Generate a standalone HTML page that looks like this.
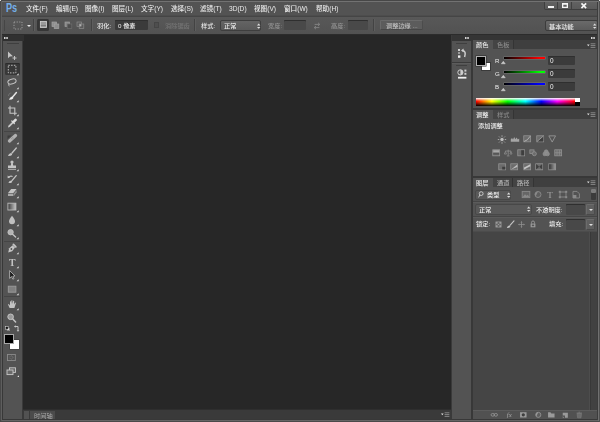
<!DOCTYPE html>
<html lang="zh-CN">
<head>
<meta charset="utf-8">
<title>Adobe Photoshop CS6</title>
<style>
html,body{margin:0;padding:0;background:#535353;}
body{width:600px;height:422px;overflow:hidden;position:relative;font-family:"Liberation Sans","Noto Sans CJK SC",sans-serif;font-size:12px;line-height:18px;color:#e6e6e6;}
#app{filter:blur(0.4px);position:absolute;left:0;top:0;width:600px;height:422px;overflow:hidden;background:#535353;}
.a{position:absolute;}
.t{position:absolute;white-space:nowrap;font-size:12.4px;line-height:18px;color:#ececec;letter-spacing:0;font-weight:500;transform:translateZ(0) scale(0.5);transform-origin:0 0;}
.m{font-size:13.2px;top:3.5px;}
.dim{color:#8d8d8d;}
.inp{position:absolute;background:#3b3b3b;box-shadow:inset 0 1px 0 #2f2f2f;border-radius:1px;}
.sel{position:absolute;background:linear-gradient(#666,#585858);border:1px solid #3a3a3a;border-radius:2px;box-sizing:border-box;}
.vsep{position:absolute;width:1px;background:#434343;border-right:1px solid #5e5e5e;}
.tabbar{position:absolute;background:#3f3f3f;}
.itab{position:absolute;background:#444;border-right:1px solid #343434;box-sizing:border-box;height:9px;}
.tab{position:absolute;background:#535353;}
svg{position:absolute;overflow:visible;transform:translateZ(0);}
</style>
</head>
<body>
<div id="app">

<!-- ===== menu bar ===== -->
<div class="a" id="menubar" style="left:0;top:0;width:600px;height:15px;background:#535353;"></div>
<div class="t" style="left:6px;top:2px;font-size:12.5px;line-height:13px;font-weight:bold;color:#74aee8;transform:scaleX(0.73);transform-origin:0 0;">Ps</div>
<div class="t m" style="left:26px;">文件(F)</div>
<div class="t m" style="left:56px;">编辑(E)</div>
<div class="t m" style="left:85px;">图像(I)</div>
<div class="t m" style="left:112px;">图层(L)</div>
<div class="t m" style="left:141px;">文字(Y)</div>
<div class="t m" style="left:171px;">选择(S)</div>
<div class="t m" style="left:200px;">滤镜(T)</div>
<div class="t m" style="left:229px;">3D(D)</div>
<div class="t m" style="left:254px;">视图(V)</div>
<div class="t m" style="left:284px;">窗口(W)</div>
<div class="t m" style="left:316px;">帮助(H)</div>

<!-- window buttons -->
<div class="a" style="left:544px;top:0;width:54px;height:10px;background:linear-gradient(#646464,#5a5a5a);border:1px solid #3e3e3e;border-top:none;box-sizing:border-box;border-radius:0 0 2px 2px;"></div>
<div class="a" style="left:557px;top:0;width:1px;height:9px;background:#404040;"></div>
<div class="a" style="left:571px;top:0;width:1px;height:9px;background:#404040;"></div>
<div class="a" style="left:548px;top:6px;width:5.5px;height:1.5px;background:#f2f2f2;"></div>
<svg style="left:561.8px;top:2.8px;" width="6" height="5" viewBox="0 0 6 5"><path d="M0 0H6V5H0zM1.3 1.8V3.8H4.7V1.8z" fill="#f4f4f4" fill-rule="evenodd"/></svg>
<svg style="left:581.2px;top:2.6px;" width="5.6" height="5.6" viewBox="0 0 5 5"><path d="M0.4 0.4L4.6 4.6M4.6 0.4L0.4 4.6" stroke="#f6f6f6" stroke-width="1.45" fill="none"/></svg>

<!-- ===== options bar ===== -->
<div class="a" style="left:0;top:15px;width:600px;height:1px;background:#4d4d4d;"></div><div class="a" style="left:0;top:16px;width:600px;height:1px;background:#454545;"></div>
<div class="a" id="optbar" style="left:0;top:17px;width:600px;height:17px;background:linear-gradient(#585858,#525252);"></div>
<div class="a" style="left:0;top:34px;width:600px;height:1px;background:#2c2c2c;"></div>

<!-- marquee tool preset -->
<div class="a" style="left:4px;top:20px;width:1px;height:11px;background:#464646;"></div>
<svg style="left:13px;top:21px;" width="10" height="9" viewBox="0 0 10 9"><rect x="1" y="1" width="8" height="7" fill="none" stroke="#a4a4a4" stroke-width="0.9" stroke-dasharray="1.2 1.4"/></svg>
<div class="a" style="left:27px;top:25px;width:0;height:0;border-left:2px solid transparent;border-right:2px solid transparent;border-top:2px solid #e8e8e8;"></div>
<div class="vsep" style="left:33px;top:19px;height:12px;"></div>
<!-- 4 selection mode buttons -->
<div class="a" style="left:37px;top:19px;width:12px;height:12px;background:#363636;border-radius:1.5px;"></div>
<svg style="left:39px;top:20px;" width="9" height="9" viewBox="0 0 9 9"><rect x="1.4" y="1.4" width="6" height="6" fill="#9a9a9a" stroke="#cdcdcd" stroke-width="0.9"/><path d="M1.8 5.6H7" stroke="#6a6a6a" stroke-width="0.7"/></svg>
<svg style="left:51px;top:21px;" width="9" height="9" viewBox="0 0 9 9"><rect x="1" y="1" width="4.6" height="4.6" fill="#8e8e8e" stroke="#a4a4a4" stroke-width="0.7"/><rect x="3.2" y="3" width="4.6" height="4.6" fill="#8e8e8e" stroke="#a4a4a4" stroke-width="0.7"/></svg>
<svg style="left:63.5px;top:21px;" width="9" height="9" viewBox="0 0 9 9"><rect x="1" y="1" width="4.6" height="4.6" fill="#8a8a8a" stroke="#9c9c9c" stroke-width="0.7"/><rect x="3.2" y="3" width="4.6" height="4.6" fill="#4e4e4e" stroke="#6e6e6e" stroke-width="0.7"/></svg>
<svg style="left:76px;top:21px;" width="9" height="9" viewBox="0 0 9 9"><rect x="1" y="1" width="4.6" height="4.6" fill="#5a5a5a" stroke="#8c8c8c" stroke-width="0.7"/><rect x="3.2" y="3" width="4.6" height="4.6" fill="#5a5a5a" stroke="#8c8c8c" stroke-width="0.7"/><rect x="3.4" y="3.2" width="2" height="2.2" fill="#b0b0b0"/></svg>
<div class="vsep" style="left:91px;top:19px;height:12px;"></div>

<div class="t" style="left:97px;top:21px;">羽化:</div>
<div class="inp" style="left:115px;top:20px;width:33px;height:10px;"></div>
<div class="t" style="left:117.5px;top:21px;">0 像素</div>
<div class="a" style="left:154px;top:22px;width:5px;height:6px;background:#4e4e4e;border:1px solid #454545;box-sizing:border-box;"></div>
<div class="t dim" style="left:164.5px;top:21px;color:#767676;">消除锯齿</div>
<div class="vsep" style="left:194px;top:19px;height:12px;"></div>
<div class="t" style="left:200.5px;top:21px;">样式:</div>
<div class="sel" style="left:220px;top:20px;width:41px;height:11px;background:linear-gradient(#646464,#595959);border-color:#3e3e3e;"></div>
<div class="t" style="left:224px;top:21px;">正常</div>
<svg style="left:256.5px;top:22.5px;" width="3.4" height="6.4" viewBox="0 0 4 7"><path d="M0 2.6L2 0.4L4 2.6zM0 4.4L2 6.6L4 4.4z" fill="#e0e0e0"/></svg>
<div class="t dim" style="left:268px;top:21px;color:#939393;">宽度:</div>
<div class="inp" style="left:284px;top:20px;width:22px;height:10px;background:#494949;"></div>
<svg style="left:313px;top:21.5px;" width="8" height="8" viewBox="0 0 8 8"><path d="M1.6 2.4H6.6M5 0.8L6.8 2.4L5 4M6.4 5.6H1.4M3 4L1.2 5.6L3 7.2" stroke="#858585" stroke-width="0.9" fill="none"/></svg>
<div class="t dim" style="left:330.5px;top:21px;color:#939393;">高度:</div>
<div class="inp" style="left:348px;top:20px;width:20px;height:10px;background:#494949;"></div>
<div class="vsep" style="left:373px;top:19px;height:12px;"></div>
<div class="a" style="left:380px;top:20px;width:43px;height:10px;background:#5c5c5c;border:1px solid #6a6a6a;border-bottom-color:#474747;border-right-color:#4c4c4c;box-sizing:border-box;border-radius:1.5px;"></div>
<div class="t dim" style="left:386px;top:20.5px;color:#bebebe;">调整边缘 ...</div>

<div class="sel" style="left:545px;top:20px;width:53px;height:11px;background:linear-gradient(#6a6a6a,#5b5b5b);border-color:#3c3c3c;"></div>
<div class="t" style="left:549px;top:21.5px;">基本功能</div>
<svg style="left:593px;top:22.5px;" width="3.4" height="6.4" viewBox="0 0 4 7"><path d="M0 2.6L2 0.4L4 2.6zM0 4.4L2 6.6L4 4.4z" fill="#e0e0e0"/></svg>

<!-- ===== canvas ===== -->
<div class="a" id="canvas" style="left:23px;top:35px;width:428px;height:376px;background:#272727;"></div>

<!-- ===== left tool panel ===== -->
<div class="a" style="left:2px;top:35px;width:1px;height:385px;background:#383838;"></div>
<div class="a" style="left:3px;top:35px;width:21px;height:6px;background:#303030;"></div>
<svg style="left:4.3px;top:37px;" width="4" height="2" viewBox="0 0 4 2"><rect x="0" y="0" width="1.5" height="2" fill="#d4d4d4"/><rect x="2.3" y="0" width="1.5" height="2" fill="#d4d4d4"/></svg>
<div class="a" id="tools" style="left:3px;top:41px;width:19px;height:378px;background:#535353;"></div>
<div class="a" style="left:22px;top:41px;width:1px;height:378px;background:#3a3a3a;"></div>
<div class="a" style="left:7px;top:43px;width:12px;height:1px;background:#3f3f3f;"></div>

<!-- TOOLS START -->
<svg style="left:3px;top:47px;" width="20" height="16" viewBox="0 0 20 16"><path d="M5 4.5L5 11.2L6.8 9.6L9.9 9.3z" fill="#c4c4c4"/><path d="M9.5 11H13.5M11.5 9V13" stroke="#c4c4c4" stroke-width="1.1" fill="none"/></svg>
<div class="a" style="left:5px;top:63px;width:15px;height:12px;background:#383838;border-radius:1.5px;box-shadow:inset 0 1px 0 #2c2c2c;"></div>
<svg style="left:3px;top:61px;" width="20" height="16" viewBox="0 0 20 16"><rect x="5.3" y="4.3" width="7.6" height="7.6" fill="none" stroke="#bcbcbc" stroke-width="1" stroke-dasharray="1.5 1.3"/><path d="M15.6 14.2L13.6 14.2L15.6 12.2z" fill="#e8e8e8"/></svg>
<svg style="left:3px;top:75px;" width="20" height="16" viewBox="0 0 20 16"><ellipse cx="9" cy="6.5" rx="4.2" ry="2.4" transform="rotate(-14 9 6.5)" fill="none" stroke="#c4c4c4" stroke-width="1"/><path d="M6 8.6Q5.2 10 6.3 11.3" stroke="#c4c4c4" stroke-width="0.9" fill="none"/><path d="M15.6 14.2L13.6 14.2L15.6 12.2z" fill="#e8e8e8"/></svg>
<svg style="left:3px;top:88px;" width="20" height="16" viewBox="0 0 20 16"><path d="M13.4 4.6L9.6 9" stroke="#e4e4e4" stroke-width="1.5" stroke-linecap="round" fill="none"/><path d="M6 11.8Q6.6 9 9 8.4Q10.8 9 10.2 10.6Q8.6 12 6 11.8z" fill="#f0f0f0"/><path d="M5.5 7.5a3 3 0 0 1 3-2.5" stroke="#9a9a9a" stroke-width="0.8" fill="none" stroke-dasharray="1 1"/><path d="M15.6 14.2L13.6 14.2L15.6 12.2z" fill="#e8e8e8"/></svg>
<svg style="left:3px;top:102px;" width="20" height="16" viewBox="0 0 20 16"><path d="M7 3.8V11.2H13.8M5 6H11.8V13.2" stroke="#c6c6c6" stroke-width="1.1" fill="none"/><path d="M15.6 14.2L13.6 14.2L15.6 12.2z" fill="#e8e8e8"/></svg>
<svg style="left:3px;top:115px;" width="20" height="16" viewBox="0 0 20 16"><path d="M5 12.4L5.4 10.8L9.4 6.8L10.6 8L6.6 12z" fill="#cacaca"/><path d="M8.8 6L11.4 8.6" stroke="#d8d8d8" stroke-width="1.2" stroke-linecap="round" fill="none"/><path d="M10.6 6.8L12.6 4.8" stroke="#e0e0e0" stroke-width="2.6" stroke-linecap="round" fill="none"/><path d="M15.6 14.2L13.6 14.2L15.6 12.2z" fill="#e8e8e8"/></svg>
<svg style="left:3px;top:130px;" width="20" height="16" viewBox="0 0 20 16"><path d="M6.5 11L12.5 5.5" stroke="#b2b2b2" stroke-width="3.3" stroke-linecap="round" fill="none"/><path d="M8.6 9L10.4 7.4" stroke="#8a8a8a" stroke-width="1.6" fill="none" stroke-dasharray="0.7 0.7"/><path d="M4.5 5.5L8.5 5.5L4.5 9z" fill="#3c3c3c"/><path d="M15.6 14.2L13.6 14.2L15.6 12.2z" fill="#e8e8e8"/></svg>
<svg style="left:3px;top:144px;" width="20" height="16" viewBox="0 0 20 16"><path d="M13.3 4L9 9" stroke="#c4c4c4" stroke-width="1.3" stroke-linecap="round" fill="none"/><path d="M5 12Q5.6 9.4 8 9Q9.6 9.6 9 11Q7.4 12.4 5 12z" fill="#c4c4c4"/><path d="M15.6 14.2L13.6 14.2L15.6 12.2z" fill="#e8e8e8"/></svg>
<svg style="left:3px;top:157px;" width="20" height="16" viewBox="0 0 20 16"><circle cx="9" cy="5" r="1.6" fill="#c4c4c4"/><path d="M8.2 6H9.8L10.2 8.6H13V11H5V8.6H7.8z" fill="#c4c4c4"/><path d="M5 12.3H13" stroke="#c4c4c4" stroke-width="0.9"/><path d="M15.6 14.2L13.6 14.2L15.6 12.2z" fill="#e8e8e8"/></svg>
<svg style="left:3px;top:171px;" width="20" height="16" viewBox="0 0 20 16"><path d="M13.2 4.6L9 9.6" stroke="#c4c4c4" stroke-width="1.3" stroke-linecap="round" fill="none"/><path d="M5.4 12Q6 9.8 8.2 9.4Q9.6 10 9 11.2Q7.6 12.4 5.4 12z" fill="#c4c4c4"/><path d="M5 6.6Q7 4.4 9.6 5.4" stroke="#c4c4c4" stroke-width="1.1" fill="none"/><path d="M4.6 4.4L4.8 7.2L7.2 6.4z" fill="#c4c4c4"/><path d="M15.6 14.2L13.6 14.2L15.6 12.2z" fill="#e8e8e8"/></svg>
<svg style="left:3px;top:184px;" width="20" height="16" viewBox="0 0 20 16"><path d="M5 9L8.2 5H13.6L10.4 9z" fill="#c4c4c4"/><path d="M5 9.6H10.4V12H5z" fill="#a8a8a8"/><path d="M10.9 9.4L13.6 6V8.6L10.9 12z" fill="#8e8e8e"/><path d="M15.6 14.2L13.6 14.2L15.6 12.2z" fill="#e8e8e8"/></svg>
<svg style="left:3px;top:198px;" width="20" height="16" viewBox="0 0 20 16"><defs><linearGradient id="gr1" x1="0" x2="1" y1="0" y2="0"><stop offset="0" stop-color="#3a3a3a"/><stop offset="1" stop-color="#c8c8c8"/></linearGradient></defs><rect x="4.9" y="5.2" width="8" height="6.8" fill="url(#gr1)" stroke="#bcbcbc" stroke-width="0.9"/><path d="M15.6 14.2L13.6 14.2L15.6 12.2z" fill="#e8e8e8"/></svg>
<svg style="left:3px;top:212px;" width="20" height="16" viewBox="0 0 20 16"><path d="M9 3.8Q12 7.6 12 9.2A3 3 0 0 1 6 9.2Q6 7.6 9 3.8z" fill="#c0c0c0"/><path d="M15.6 14.2L13.6 14.2L15.6 12.2z" fill="#e8e8e8"/></svg>
<svg style="left:3px;top:225px;" width="20" height="16" viewBox="0 0 20 16"><circle cx="7.6" cy="7.2" r="2.7" fill="#b4b4b4" stroke="#c4c4c4" stroke-width="0.8"/><path d="M9.6 9.2L12.6 12" stroke="#c4c4c4" stroke-width="1.3" stroke-linecap="round"/><path d="M15.6 14.2L13.6 14.2L15.6 12.2z" fill="#e8e8e8"/></svg>
<svg style="left:3px;top:240px;" width="20" height="16" viewBox="0 0 20 16"><path d="M5.2 12.4L6.2 8.2L9.6 5.2L12 7.6L9.2 11.2z" fill="#c4c4c4"/><circle cx="8.4" cy="9" r="0.9" fill="#535353"/><path d="M10.4 4.4L12.8 6.8" stroke="#c4c4c4" stroke-width="1.8" stroke-linecap="round"/><path d="M15.6 14.2L13.6 14.2L15.6 12.2z" fill="#e8e8e8"/></svg>
<svg style="left:3px;top:254px;" width="20" height="16" viewBox="0 0 20 16"><text transform="translate(9.2 11.6) scale(0.5)" x="0" y="0" text-anchor="middle" font-family="Liberation Serif, serif" font-weight="bold" font-size="19.6" fill="#c4c4c4">T</text><path d="M15.6 14.2L13.6 14.2L15.6 12.2z" fill="#e8e8e8"/></svg>
<svg style="left:3px;top:267px;" width="20" height="16" viewBox="0 0 20 16"><path d="M6.6 3.6L6.6 11.4L8.6 9.6L9.8 12.2L11 11.6L9.8 9.2L12 9z" fill="#1e1e1e" stroke="#bdbdbd" stroke-width="0.8"/><path d="M15.6 14.2L13.6 14.2L15.6 12.2z" fill="#e8e8e8"/></svg>
<svg style="left:3px;top:281px;" width="20" height="16" viewBox="0 0 20 16"><rect x="5.3" y="5.2" width="7.6" height="6" fill="#808080" stroke="#9c9c9c" stroke-width="0.9"/><path d="M15.6 14.2L13.6 14.2L15.6 12.2z" fill="#e8e8e8"/></svg>
<svg style="left:3px;top:296px;" width="20" height="16" viewBox="0 0 20 16"><path d="M6.6 12L5 8.6L5.8 8L7 9.4V5.4L7.9 5.2L8.3 8V4.4L9.3 4.3L9.6 8L10.2 4.8L11.2 5L11 8.4L12.2 6.4L13 6.9L12 10L11.4 12z" fill="#c4c4c4"/><path d="M15.6 14.2L13.6 14.2L15.6 12.2z" fill="#e8e8e8"/></svg>
<svg style="left:3px;top:310px;" width="20" height="16" viewBox="0 0 20 16"><circle cx="7.6" cy="6.8" r="2.8" fill="#9a9a9a" stroke="#c4c4c4" stroke-width="1"/><path d="M9.8 9L12.6 12" stroke="#c4c4c4" stroke-width="1.5" stroke-linecap="round"/></svg>
<div class="a" style="left:4px;top:131px;width:16px;height:1px;background:#454545;"></div>
<div class="a" style="left:4px;top:241px;width:16px;height:1px;background:#454545;"></div>
<div class="a" style="left:4px;top:296px;width:16px;height:1px;background:#454545;"></div>
<svg style="left:5px;top:326px;" width="5" height="5" viewBox="0 0 5 5"><rect x="1.9" y="1.9" width="2.8" height="2.8" fill="#f0f0f0" stroke="#333" stroke-width="0.4"/><rect x="0.4" y="0.4" width="2.8" height="2.8" fill="#111" stroke="#d0d0d0" stroke-width="0.6"/></svg>
<svg style="left:14px;top:325px;" width="6" height="7" viewBox="0 0 6 7"><path d="M1 1.5H4V5.5" stroke="#d0d0d0" stroke-width="0.9" fill="none"/><path d="M0 1.5L1.6 0.2V2.8zM4 6.8L2.7 5.2H5.3z" fill="#d0d0d0"/></svg>
<div class="a" style="left:10px;top:340px;width:9px;height:9px;background:#fff;box-shadow:0 0 0 0.5px #3a3a3a;"></div>
<div class="a" style="left:4px;top:334px;width:10px;height:10px;background:#000;border:1px solid #a8a8a8;box-sizing:border-box;"></div>
<svg style="left:7.4px;top:353.6px;" width="8.8" height="7" viewBox="0 0 10 8"><rect x="0.5" y="0.5" width="9" height="7" fill="none" stroke="#8c8c8c" stroke-width="1"/><circle cx="5" cy="4" r="1.8" fill="none" stroke="#8c8c8c" stroke-width="0.8" stroke-dasharray="1 0.8"/></svg>
<svg style="left:6px;top:367px;" width="14" height="11" viewBox="0 0 14 11"><rect x="3.5" y="0.8" width="6" height="4.6" fill="#6a6a6a" stroke="#c8c8c8" stroke-width="0.9"/><rect x="1" y="3" width="6" height="4.6" fill="#6a6a6a" stroke="#c8c8c8" stroke-width="0.9"/><path d="M13 10L11.2 10L13 8.2z" fill="#e8e8e8"/></svg>
<!-- TOOLS END -->

<!-- timeline bar -->
<div class="a" style="left:23px;top:409px;width:428px;height:1px;background:#2e2e2e;"></div>
<div class="a" style="left:23px;top:410px;width:428px;height:9px;background:#3a3a3a;"></div>
<div class="a" style="left:24px;top:411px;width:5px;height:8px;background:#525252;"></div>
<div class="a" style="left:30px;top:411px;width:25px;height:8px;background:#4b4b4b;"></div>
<div class="t" style="left:34px;top:410.5px;color:#aaaaaa;font-weight:400;">时间轴</div>
<div class="a" style="left:0;top:419px;width:600px;height:1px;background:#383838;"></div>
<div class="a" style="left:0;top:420px;width:600px;height:1px;background:#646464;"></div>
<div class="a" style="left:0;top:421px;width:600px;height:1px;background:#4a4a4a;"></div>

<!-- ===== right dock ===== -->
<div class="a" style="left:451px;top:35px;width:149px;height:6px;background:#353535;"></div><div class="a" style="left:473px;top:49px;width:124px;height:1px;background:#535353;"></div>
<div class="a" style="left:451px;top:41px;width:20px;height:378px;background:#535353;"></div>
<div class="a" style="left:451px;top:35px;width:1px;height:384px;background:#3a3a3a;"></div>
<div class="a" style="left:471px;top:41px;width:2px;height:378px;background:#383838;"></div>
<div class="a" style="left:597px;top:2px;width:1px;height:418px;background:#3c3c3c;"></div>
<div class="a" style="left:598px;top:1px;width:1px;height:420px;background:#707070;"></div>
<div class="a" style="left:599px;top:0;width:1px;height:422px;background:#505050;"></div>

<!-- color panel -->
<div class="tabbar" style="left:473px;top:40px;width:124px;height:9px;"></div>
<div class="tab" style="left:473px;top:40px;width:20px;height:9px;"></div>
<div class="itab" style="left:493px;top:40px;width:21px;"></div>
<div class="t" style="left:476px;top:40.3px;">颜色</div>
<div class="t dim" style="left:497px;top:40.3px;color:#8a8a8a;">色板</div>

<!-- adjustments panel -->
<div class="a" style="left:473px;top:108px;width:124px;height:2px;background:#383838;"></div>
<div class="tabbar" style="left:473px;top:110px;width:124px;height:9px;"></div>
<div class="tab" style="left:473px;top:110px;width:20px;height:9px;"></div>
<div class="itab" style="left:493px;top:110px;width:21px;"></div>
<div class="t" style="left:476px;top:110px;">调整</div>
<div class="t dim" style="left:497px;top:110px;color:#8a8a8a;">样式</div>
<div class="t" style="left:477.6px;top:121.4px;">添加调整</div>

<!-- layers panel -->
<div class="a" style="left:473px;top:176px;width:124px;height:2px;background:#383838;"></div>
<div class="tabbar" style="left:473px;top:178px;width:124px;height:9px;"></div>
<div class="tab" style="left:473px;top:178px;width:20px;height:9px;"></div>
<div class="itab" style="left:493px;top:178px;width:20px;"></div><div class="itab" style="left:513px;top:178px;width:21px;"></div>
<div class="t" style="left:476px;top:178px;">图层</div>
<div class="t dim" style="left:497px;top:178px;color:#b4b4b4;">通道</div>
<div class="t dim" style="left:517px;top:178px;color:#b4b4b4;">路径</div>

<div class="a" style="left:473px;top:231px;width:117px;height:179px;background:#454545;"></div>
<div class="a" style="left:589px;top:232px;width:1px;height:178px;background:#4d4d4d;"></div><div class="a" style="left:590px;top:232px;width:7px;height:178px;background:#414141;border-left:1px solid #383838;box-sizing:border-box;"></div>
<div class="a" style="left:473px;top:410px;width:124px;height:9px;background:#515151;border-top:1px solid #5c5c5c;box-sizing:border-box;"></div>

<!-- window frame -->
<div class="a" style="left:0;top:0;width:600px;height:1px;background:#474747;"></div>
<div class="a" style="left:1px;top:1px;width:598px;height:1px;background:#727272;"></div>
<div class="a" style="left:0;top:0;width:1px;height:422px;background:#484848;"></div>
<div class="a" style="left:1px;top:1px;width:1px;height:420px;background:#5e5e5e;"></div>
<div class="a" style="left:0;top:0;width:1px;height:1px;background:#e0e0e0;"></div>
<div class="a" style="left:599px;top:0;width:1px;height:1px;background:#e0e0e0;"></div>
<!-- PANELS START -->
<svg style="left:465px;top:37.2px;" width="4" height="2" viewBox="0 0 4 2"><rect x="0" y="0" width="1.5" height="2" fill="#d4d4d4"/><rect x="2.3" y="0" width="1.5" height="2" fill="#d4d4d4"/></svg>
<svg style="left:591.3px;top:37.2px;" width="4" height="2" viewBox="0 0 4 2"><rect x="0" y="0" width="1.5" height="2" fill="#d4d4d4"/><rect x="2.3" y="0" width="1.5" height="2" fill="#d4d4d4"/></svg>
<div class="a" style="left:456px;top:43px;width:11px;height:1px;background:#3f3f3f;"></div>
<svg style="left:456px;top:47px;" width="12" height="12" viewBox="0 0 12 12"><rect x="2" y="2" width="2" height="2" fill="#cfcfcf"/><rect x="2" y="5" width="2" height="2" fill="#9a9a9a"/><rect x="2" y="8.4" width="2.4" height="2.4" fill="#f0f0f0"/><path d="M6.2 3.4Q10.6 4 8.6 10" stroke="#cfcfcf" stroke-width="1.5" fill="none"/><path d="M5 3.4L7.6 1.6V5.2z" fill="#cfcfcf"/></svg>
<div class="a" style="left:452px;top:62px;width:19px;height:1px;background:#3a3a3a;"></div><div class="a" style="left:452px;top:63px;width:19px;height:1px;background:#5c5c5c;"></div>
<div class="a" style="left:456px;top:65px;width:11px;height:1px;background:#3f3f3f;"></div>
<svg style="left:456px;top:68px;" width="12" height="12" viewBox="0 0 12 12"><circle cx="4.4" cy="4.4" r="2.6" fill="none" stroke="#cfcfcf" stroke-width="1"/><path d="M4.4 1.8A2.6 2.6 0 0 1 4.4 7z" fill="#cfcfcf"/><rect x="8.4" y="1.6" width="2" height="2" fill="#cfcfcf"/><rect x="8.4" y="4.8" width="2" height="2" fill="#cfcfcf"/><rect x="2" y="8.8" width="8.4" height="1.8" fill="#f0f0f0"/></svg>
<svg style="left:587px;top:42.5px;" width="9" height="6" viewBox="0 0 9 6"><path d="M0 1.6H2.6L1.3 3.2z" fill="#e0e0e0"/><path d="M3.6 0.8H8.4M3.6 2.6H8.4M3.6 4.4H8.4" stroke="#8e8e8e" stroke-width="0.9"/></svg>
<svg style="left:587px;top:112px;" width="9" height="6" viewBox="0 0 9 6"><path d="M0 1.6H2.6L1.3 3.2z" fill="#e0e0e0"/><path d="M3.6 0.8H8.4M3.6 2.6H8.4M3.6 4.4H8.4" stroke="#8e8e8e" stroke-width="0.9"/></svg>
<svg style="left:587px;top:180px;" width="9" height="6" viewBox="0 0 9 6"><path d="M0 1.6H2.6L1.3 3.2z" fill="#e0e0e0"/><path d="M3.6 0.8H8.4M3.6 2.6H8.4M3.6 4.4H8.4" stroke="#8e8e8e" stroke-width="0.9"/></svg>
<div class="a" style="left:481px;top:62px;width:10px;height:9px;background:#fff;border:0.5px solid #3a3a3a;box-sizing:border-box;"></div>
<div class="a" style="left:476px;top:56px;width:10px;height:9.5px;background:#000;border:1px solid #b0b0b0;box-sizing:border-box;box-shadow:0 0 0 0.5px #2a2a2a;"></div>
<div class="t" style="left:495px;top:55.5px;font-size:12.2px;font-weight:400;">R</div>
<div class="a" style="left:503.5px;top:57.4px;width:41.5px;height:2px;background:linear-gradient(90deg,#000,#ff0000 88%);box-shadow:0 0 0 0.5px #777;"></div>
<svg style="left:501.3px;top:61.0px;" width="4.6" height="3.2" viewBox="0 0 6 4"><path d="M3 0.3L5.6 3.6H0.4z" fill="#c8c8c8" stroke="#e8e8e8" stroke-width="0.5"/></svg>
<div class="inp" style="left:548px;top:56px;width:26.5px;height:9.3px;"></div>
<div class="t" style="left:549.8px;top:56px;font-size:12.8px;font-weight:400;color:#f4f4f4;">0</div>
<div class="t" style="left:495px;top:69.0px;font-size:12.2px;font-weight:400;">G</div>
<div class="a" style="left:503.5px;top:70.6px;width:41.5px;height:2px;background:linear-gradient(90deg,#000,#00ff00 88%);box-shadow:0 0 0 0.5px #777;"></div>
<svg style="left:501.3px;top:74.5px;" width="4.6" height="3.2" viewBox="0 0 6 4"><path d="M3 0.3L5.6 3.6H0.4z" fill="#c8c8c8" stroke="#e8e8e8" stroke-width="0.5"/></svg>
<div class="inp" style="left:548px;top:69px;width:26.5px;height:9.3px;"></div>
<div class="t" style="left:549.8px;top:69.2px;font-size:12.8px;font-weight:400;color:#f4f4f4;">0</div>
<div class="t" style="left:495px;top:82.0px;font-size:12.2px;font-weight:400;">B</div>
<div class="a" style="left:503.5px;top:83.3px;width:41.5px;height:2px;background:linear-gradient(90deg,#000,#0000ff 88%);box-shadow:0 0 0 0.5px #777;"></div>
<svg style="left:501.3px;top:87.5px;" width="4.6" height="3.2" viewBox="0 0 6 4"><path d="M3 0.3L5.6 3.6H0.4z" fill="#c8c8c8" stroke="#e8e8e8" stroke-width="0.5"/></svg>
<div class="inp" style="left:548px;top:82px;width:26.5px;height:9.3px;"></div>
<div class="t" style="left:549.8px;top:82.2px;font-size:12.8px;font-weight:400;color:#f4f4f4;">0</div>
<div class="a" style="left:476px;top:98px;width:99px;height:7.5px;background:linear-gradient(90deg,#f00 0%,#ff0 16%,#0f0 32%,#0ff 50%,#00f 66%,#f0f 82%,#f00 100%);"></div>
<div class="a" style="left:476px;top:98px;width:99px;height:7.5px;background:linear-gradient(180deg,rgba(255,255,255,1) 0%,rgba(255,255,255,0) 40%,rgba(0,0,0,0) 45%,rgba(0,0,0,1) 100%);"></div>
<div class="a" style="left:575px;top:98px;width:4.5px;height:3.5px;background:#fff;"></div><div class="a" style="left:575px;top:101.5px;width:4.5px;height:4px;background:#000;"></div>
<svg style="left:496.7px;top:134.6px;" width="10" height="9" viewBox="0 0 10 9"><circle cx="5" cy="4.5" r="1.7" fill="#bdbdbd"/><path d="M5 0.3V1.8M5 7.2V8.7M0.8 4.5H2.3M7.7 4.5H9.2M2 1.5L3 2.5M7 6.5L8 7.5M8 1.5L7 2.5M3 6.5L2 7.5" stroke="#bdbdbd" stroke-width="0.8"/></svg>
<svg style="left:509.5px;top:135.3px;" width="10" height="7.6" preserveAspectRatio="none" viewBox="0 0 10 9"><path d="M0.8 8V5L2 3.6L3 5.4L4.2 2.4L5.4 5L6.6 3L7.8 5.2L9.2 4V8z" fill="#a6a6a6"/></svg>
<svg style="left:522.8px;top:135.3px;" width="8.4" height="7.6" viewBox="0 0 10 9"><rect x="0.9" y="0.9" width="8.2" height="7.2" fill="#6c6c6c" stroke="#959595" stroke-width="0.9"/><path d="M1.4 7.6Q5.5 6.8 8.6 1.4" stroke="#c4c4c4" stroke-width="0.9" fill="none"/></svg>
<svg style="left:535.5px;top:135.3px;" width="8.4" height="7.6" viewBox="0 0 10 9"><rect x="0.9" y="0.9" width="8.2" height="7.2" fill="#6c6c6c" stroke="#959595" stroke-width="0.9"/><path d="M1.3 7.7L8.7 1.3V7.7z" fill="#3e3e3e"/><path d="M1.3 7.7L8.7 1.3" stroke="#c4c4c4" stroke-width="0.7"/></svg>
<svg style="left:547.8px;top:135.3px;" width="8.4" height="7.6" viewBox="0 0 10 9"><path d="M1 1H9L5 8.4z" fill="none" stroke="#959595" stroke-width="1.1"/></svg>
<svg style="left:491.6px;top:149.3px;" width="8.4" height="7.6" viewBox="0 0 10 9"><rect x="0.9" y="0.9" width="8.2" height="7.2" fill="#6c6c6c" stroke="#959595" stroke-width="0.9"/><rect x="1.4" y="1.4" width="7.2" height="2.6" fill="#a8a8a8"/><path d="M1.4 5.8H8.6" stroke="#3e3e3e" stroke-width="0.9"/></svg>
<svg style="left:504.0px;top:149.3px;" width="8.4" height="7.6" viewBox="0 0 10 9"><path d="M5 0.8V7.6M1.6 2.4H8.4M3.4 8.2H6.6" stroke="#959595" stroke-width="0.9" fill="none"/><path d="M0.4 6L1.7 2.8L3 6zM7 6L8.3 2.8L9.6 6z" fill="none" stroke="#959595" stroke-width="0.8"/></svg>
<svg style="left:516.5px;top:149.3px;" width="8.4" height="7.6" viewBox="0 0 10 9"><rect x="0.9" y="0.9" width="8.2" height="7.2" fill="#6c6c6c" stroke="#959595" stroke-width="0.9"/><rect x="5" y="1.4" width="3.6" height="6.2" fill="#3e3e3e"/></svg>
<svg style="left:529.1px;top:149.3px;" width="8.4" height="7.6" viewBox="0 0 10 9"><rect x="1" y="1" width="5" height="4.4" fill="#6c6c6c" stroke="#959595" stroke-width="0.9"/><circle cx="6.4" cy="5.6" r="2.4" fill="#6c6c6c" stroke="#959595" stroke-width="0.9"/></svg>
<svg style="left:541.5px;top:149.3px;" width="8.4" height="7.6" viewBox="0 0 10 9"><circle cx="5" cy="3.2" r="2.3" fill="#8a8a8a" stroke="#959595" stroke-width="0.7"/><circle cx="3.4" cy="5.8" r="2.3" fill="#8a8a8a" stroke="#959595" stroke-width="0.7"/><circle cx="6.6" cy="5.8" r="2.3" fill="#8a8a8a" stroke="#959595" stroke-width="0.7"/></svg>
<svg style="left:554.3px;top:149.3px;" width="8.4" height="7.6" viewBox="0 0 10 9"><rect x="0.9" y="0.9" width="8.2" height="7.2" fill="#6c6c6c" stroke="#959595" stroke-width="0.9"/><path d="M3.6 1.2V7.8M6.4 1.2V7.8M1.2 4.5H8.8" stroke="#959595" stroke-width="0.8"/></svg>
<svg style="left:497.6px;top:163.3px;" width="8.4" height="7.6" viewBox="0 0 10 9"><rect x="0.9" y="0.9" width="8.2" height="7.2" fill="#6c6c6c" stroke="#959595" stroke-width="0.9"/><path d="M1.3 7.7H5V4.5H8.7V7.7z" fill="#3e3e3e"/></svg>
<svg style="left:510.3px;top:163.3px;" width="8.4" height="7.6" viewBox="0 0 10 9"><rect x="0.9" y="0.9" width="8.2" height="7.2" fill="#6c6c6c" stroke="#959595" stroke-width="0.9"/><path d="M1.3 7.7L8.7 1.8V4.6L1.3 7.7z" fill="#bcbcbc"/></svg>
<svg style="left:522.8px;top:163.3px;" width="8.4" height="7.6" viewBox="0 0 10 9"><rect x="0.9" y="0.9" width="8.2" height="7.2" fill="#6c6c6c" stroke="#959595" stroke-width="0.9"/><path d="M1.3 5.4L8.7 1.6V3.8L1.3 7.6z" fill="#c4c4c4"/></svg>
<svg style="left:535.2px;top:163.3px;" width="8.4" height="7.6" viewBox="0 0 10 9"><rect x="0.9" y="0.9" width="8.2" height="7.2" fill="#6c6c6c" stroke="#959595" stroke-width="0.9"/><path d="M1.3 1.3L5 4.5L1.3 7.7zM8.7 1.3L5 4.5L8.7 7.7z" fill="#3e3e3e"/></svg>
<svg style="left:547.8px;top:163.3px;" width="8.4" height="7.6" viewBox="0 0 10 9"><defs><linearGradient id="gr2" x1="0" x2="1"><stop offset="0" stop-color="#2e2e2e"/><stop offset="1" stop-color="#a0a0a0"/></linearGradient></defs><rect x="0.9" y="0.9" width="8.2" height="7.2" fill="url(#gr2)" stroke="#959595" stroke-width="0.9"/></svg>
<div class="sel" style="left:475px;top:190px;width:36px;height:10px;background:#595959;border-color:#484848;"></div>
<svg style="left:478px;top:191px;" width="6" height="7" viewBox="0 0 6 7"><circle cx="3.2" cy="2.6" r="1.9" fill="none" stroke="#cfcfcf" stroke-width="0.9"/><path d="M1.8 4L0.6 6.4" stroke="#cfcfcf" stroke-width="0.9"/></svg>
<div class="t" style="left:486.5px;top:190px;">类型</div>
<svg style="left:506.5px;top:191.5px;" width="3.4" height="6.4" viewBox="0 0 4 7"><path d="M0 2.6L2 0.4L4 2.6zM0 4.4L2 6.6L4 4.4z" fill="#e0e0e0"/></svg>
<svg style="left:521px;top:190px;" width="10" height="9" viewBox="0 0 10 9"><rect x="1.2" y="1.4" width="7.6" height="6.2" fill="#666" stroke="#8a8a8a" stroke-width="0.9"/><path d="M1.6 7L4 4.2L5.6 5.8L6.8 4.8L8.4 7z" fill="#8a8a8a"/></svg>
<svg style="left:533px;top:190px;" width="10" height="9" viewBox="0 0 10 9"><circle cx="5" cy="4.5" r="3" fill="#5e5e5e" stroke="#8a8a8a" stroke-width="0.9"/><path d="M5 1.5A3 3 0 0 0 2.6 6.4z" fill="#8a8a8a"/></svg>
<svg style="left:545px;top:190px;" width="10" height="9" viewBox="0 0 10 9"><text transform="translate(5 8) scale(0.5)" x="0" y="0" text-anchor="middle" font-family="Liberation Serif, serif" font-size="18" fill="#a8a8a8">T</text></svg>
<svg style="left:558px;top:190px;" width="10" height="9" viewBox="0 0 10 9"><rect x="2" y="2" width="6" height="5" fill="none" stroke="#8a8a8a" stroke-width="0.9"/><rect x="0.8" y="0.8" width="2" height="2" fill="#8a8a8a"/><rect x="7.2" y="0.8" width="2" height="2" fill="#8a8a8a"/><rect x="0.8" y="6.2" width="2" height="2" fill="#8a8a8a"/><rect x="7.2" y="6.2" width="2" height="2" fill="#8a8a8a"/></svg>
<svg style="left:571px;top:190px;" width="10" height="9" viewBox="0 0 10 9"><path d="M2 8V1.4H6L8.4 3.8V8z" fill="none" stroke="#8a8a8a" stroke-width="0.9"/><rect x="2" y="5" width="3.4" height="3" fill="#8a8a8a"/></svg>
<div class="a" style="left:591px;top:189px;width:5px;height:11px;background:#3b3b3b;border-radius:1px;"></div><div class="a" style="left:591px;top:189px;width:5px;height:4px;background:#7c7c7c;border-radius:1px;"></div>
<div class="a" style="left:473px;top:201px;width:124px;height:1px;background:#454545;"></div><div class="a" style="left:473px;top:202px;width:124px;height:1px;background:#5b5b5b;"></div>
<div class="sel" style="left:475px;top:204px;width:57px;height:11px;background:#595959;border-color:#484848;"></div>
<div class="t" style="left:479px;top:205px;">正常</div>
<svg style="left:526.8px;top:206px;" width="3.4" height="6.4" viewBox="0 0 4 7"><path d="M0 2.6L2 0.4L4 2.6zM0 4.4L2 6.6L4 4.4z" fill="#e0e0e0"/></svg>
<div class="t" style="left:536px;top:205px;">不透明度:</div>
<div class="inp" style="left:566px;top:204px;width:19px;height:11px;background:#484848;"></div>
<div class="a" style="left:586px;top:204px;width:9px;height:11px;background:#5f5f5f;border:1px solid #6b6b6b;border-right-color:#4c4c4c;border-bottom-color:#4a4a4a;box-sizing:border-box;border-radius:1.5px;"></div><div class="a" style="left:588.5px;top:208.5px;width:0;height:0;border-left:2px solid transparent;border-right:2px solid transparent;border-top:2px solid #e0e0e0;"></div>
<div class="a" style="left:473px;top:216px;width:124px;height:1px;background:#454545;"></div><div class="a" style="left:473px;top:217px;width:124px;height:1px;background:#5b5b5b;"></div>
<div class="t" style="left:476px;top:218.5px;">锁定:</div>
<svg style="left:494.5px;top:220.5px;" width="7" height="7" viewBox="0 0 9 9"><rect x="1.2" y="1.2" width="6.6" height="6.6" fill="none" stroke="#9a9a9a" stroke-width="1"/><path d="M1.2 1.2h2.2v2.2h-2.2zM5.6 1.2h2.2v2.2h-2.2zM3.4 3.4h2.2v2.2h-2.2zM1.2 5.6h2.2v2.2h-2.2zM5.6 5.6h2.2v2.2h-2.2z" fill="#9a9a9a"/></svg>
<svg style="left:506px;top:219.5px;" width="9" height="9" viewBox="0 0 9 9"><path d="M8 0.8L4.2 5.2" stroke="#c4c4c4" stroke-width="1.1" stroke-linecap="round"/><path d="M0.8 8Q1.4 5.6 3.4 5.2Q4.8 5.8 4.2 7Q3 8.2 0.8 8z" fill="#c4c4c4"/></svg>
<svg style="left:517.5px;top:220.5px;" width="7" height="7" viewBox="0 0 9 9"><path d="M4.5 1.4V7.6M1.4 4.5H7.6" stroke="#909090" stroke-width="1"/><path d="M4.5 0L5.8 1.8H3.2zM4.5 9L5.8 7.2H3.2zM0 4.5L1.8 3.2V5.8zM9 4.5L7.2 3.2V5.8z" fill="#909090"/></svg>
<svg style="left:529px;top:220px;" width="8" height="8" viewBox="0 0 9 9"><path d="M2.8 4V2.8A1.7 1.7 0 0 1 6.2 2.8V4" fill="none" stroke="#9c9c9c" stroke-width="1"/><rect x="1.8" y="4" width="5.4" height="4.2" fill="#9c9c9c"/><rect x="3.2" y="5.2" width="2.6" height="1.8" fill="#555"/></svg>
<div class="t" style="left:548.7px;top:218.5px;">填充:</div>
<div class="inp" style="left:566px;top:219px;width:19px;height:11px;background:#484848;"></div>
<div class="a" style="left:586px;top:219px;width:9px;height:11px;background:#5f5f5f;border:1px solid #6b6b6b;border-right-color:#4c4c4c;border-bottom-color:#4a4a4a;box-sizing:border-box;border-radius:1.5px;"></div><div class="a" style="left:588.5px;top:223.5px;width:0;height:0;border-left:2px solid transparent;border-right:2px solid transparent;border-top:2px solid #e0e0e0;"></div>
<div class="a" style="left:473px;top:231px;width:124px;height:1px;background:#4c4c4c;"></div>
<svg style="left:490.4px;top:411.2px;" width="8.6" height="7.7" viewBox="0 0 10 9"><ellipse cx="3.2" cy="4.5" rx="2" ry="1.6" fill="none" stroke="#9a9a9a" stroke-width="0.9"/><ellipse cx="6.8" cy="4.5" rx="2" ry="1.6" fill="none" stroke="#9a9a9a" stroke-width="0.9"/></svg>
<svg style="left:505.0px;top:411.2px;" width="8.6" height="7.7" viewBox="0 0 10 9"><text transform="translate(5 7) scale(0.5)" x="0" y="0" text-anchor="middle" font-family="Liberation Serif, serif" font-style="italic" font-size="16" fill="#a8a8a8">fx</text></svg>
<svg style="left:519.2px;top:411.2px;" width="8.6" height="7.7" viewBox="0 0 10 9"><rect x="1.2" y="1.4" width="7.6" height="6.2" fill="#9a9a9a"/><circle cx="5" cy="4.5" r="1.9" fill="#3e3e3e"/></svg>
<svg style="left:533.6px;top:411.2px;" width="8.6" height="7.7" viewBox="0 0 10 9"><circle cx="5" cy="4.5" r="3" fill="#5e5e5e" stroke="#9a9a9a" stroke-width="0.9"/><path d="M5 1.5A3 3 0 0 0 2.6 6.4z" fill="#9a9a9a"/></svg>
<svg style="left:547.2px;top:411.2px;" width="8.6" height="7.7" viewBox="0 0 10 9"><path d="M1.2 1.6H4L5 2.8H8.8V7.6H1.2z" fill="#9a9a9a"/></svg>
<svg style="left:560.5px;top:411.2px;" width="8.6" height="7.7" viewBox="0 0 10 9"><path d="M2 2H8V8H4.6V5.4H2z" fill="#9a9a9a"/><path d="M2 6.2L3.8 8H2z" fill="#9a9a9a"/></svg>
<svg style="left:574.9px;top:411.2px;" width="8.6" height="7.7" viewBox="0 0 10 9"><path d="M2.4 3H7.6L7 8H3z" fill="#6c6c6c" stroke="#7c7c7c" stroke-width="0.7"/><path d="M1.8 2.4H8.2M4 1.4H6" stroke="#7c7c7c" stroke-width="0.9"/></svg>
<svg style="left:441px;top:412px;" width="9" height="6" viewBox="0 0 9 6"><path d="M0 1.6H2.6L1.3 3.2z" fill="#e0e0e0"/><path d="M3.6 0.8H8.4M3.6 2.6H8.4M3.6 4.4H8.4" stroke="#8e8e8e" stroke-width="0.9"/></svg>
<!-- PANELS END -->
</div>
</body>
</html>
